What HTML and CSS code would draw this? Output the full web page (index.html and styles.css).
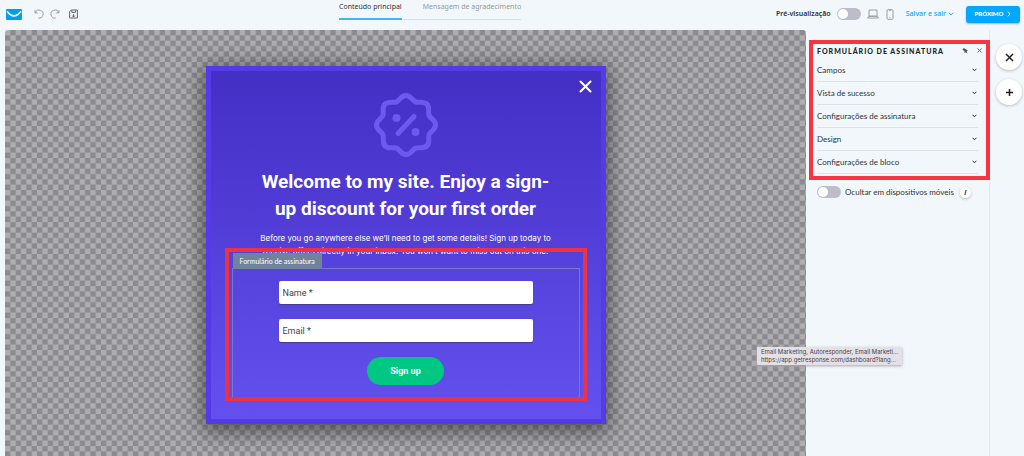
FILE: index.html
```
<!DOCTYPE html>
<html lang="pt">
<head>
<meta charset="utf-8">
<title>Formulário de assinatura</title>
<link rel="stylesheet" href="styles.css">
</head>
<body>
<div class="app">
  <header class="topbar">
    <div class="topbar-left">
      <a class="logo" href="#" aria-label="GetResponse"><svg width="16" height="11" viewBox="0 0 16 11"><rect width="16" height="11" rx="1" fill="#00a0e6" stroke="none"/><path d="M1 2.2Q8 11.5 15 2.2" fill="none" stroke="#fff" stroke-width="1.7"/></svg></a>
      <div class="history">
        <button class="icon-btn muted" aria-label="Desfazer"><svg width="10" height="10" viewBox="0 0 10 10"><path d="M1 1.2v2.7h2.8M1.3 3.7A4 4 0 1 1 4.2 9" /></svg></button>
        <button class="icon-btn muted" aria-label="Refazer"><svg width="10" height="10" viewBox="0 0 10 10"><path d="M9 1.2v2.7H6.2M8.7 3.7A4 4 0 1 0 5.8 9" /></svg></button>
      </div>
      <button class="icon-btn save-icon" aria-label="Salvar"><svg width="9" height="10" viewBox="0 0 9 10"><path d="M2.2 1H8.4V9H.6V2.8zM2.8 1.2V3.4H6.4V1.2M4.5 5.2V8M3.2 6.6 4.5 8 5.8 6.6"/></svg></button>
    </div>
    <nav class="tabs">
      <a class="tab active" href="#">Conteúdo principal</a>
      <a class="tab" href="#">Mensagem de agradecimento</a>
    </nav>
    <div class="topbar-right">
      <label class="preview">Pré-visualização <input type="checkbox" class="switch"></label>
      <div class="devices">
        <button class="icon-btn muted" aria-label="Computador"><svg width="12" height="10" viewBox="0 0 12 10"><path d="M2 1H10V7.2H2zM.5 9H11.5L10.2 7.2H1.8z"/></svg></button>
        <button class="icon-btn muted" aria-label="Telemóvel"><svg width="8" height="11" viewBox="0 0 8 11"><rect x="1" y=".7" width="6" height="9.6" rx="1"/><path d="M3.5 8.8h1M3.4.9v.7h1.2V.9"/></svg></button>
      </div>
      <button class="save">Salvar e sair <svg width="6" height="4" viewBox="0 0 6 4"><path d="M1 .8 3 2.9 5 .8"/></svg></button>
      <button class="next">PRÓXIMO <svg width="4" height="6" viewBox="0 0 4 6"><path d="M.8.6 3.1 3 .8 5.4"/></svg></button>
    </div>
  </header>
  <div class="workspace">
    <main class="canvas">
      <svg class="checker" aria-hidden="true"><defs><pattern id="checks" width="32" height="32" patternUnits="userSpaceOnUse" patternTransform="scale(.3333)"><path fill="#aeaeb1" d="M0 0h32v32H0z"/><path fill="#8b8b8f" d="M16 0h16v16H16zM0 16h16v16H0z"/></pattern></defs><rect width="100%" height="100%" fill="url(#checks)"/></svg>
      <section class="popup">
        <button class="popup-close" aria-label="Fechar"><svg width="13" height="13" viewBox="0 0 13 13"><path d="M1.5 1.5 11.5 11.5M11.5 1.5 1.5 11.5"/></svg></button>
        <svg class="seal" width="66" height="66" viewBox="-33 -33 66 66">
          <defs><path id="lobe" d="M0-29.5C5-29.5 6-24.6 9.6-23.1 13.2-21.6 17-24.8 20.9-20.9"/></defs>
          <use href="#lobe"/><use href="#lobe" transform="rotate(45)"/><use href="#lobe" transform="rotate(90)"/><use href="#lobe" transform="rotate(135)"/><use href="#lobe" transform="rotate(180)"/><use href="#lobe" transform="rotate(225)"/><use href="#lobe" transform="rotate(270)"/><use href="#lobe" transform="rotate(315)"/>
          <path d="M-8 8.5 8-8.5"/>
          <g fill="currentColor" stroke="none"><circle cx="-9.5" cy="-7" r="4"/><circle cx="9.5" cy="7" r="4"/></g>
        </svg>
        <h1>Welcome to my site. Enjoy a sign-<br>up discount for your first order</h1>
        <p class="lead">Before you go anywhere else we’ll need to get some details! Sign up today to<br>receive offers directly in your inbox. You won’t want to miss out on this one!</p>
        <div class="highlight">
          <form class="signup">
            <span class="block-tag">Formulário de assinatura</span>
            <input type="text" placeholder="Name *" aria-label="Name">
            <input type="email" placeholder="Email *" aria-label="Email">
            <button type="button" class="submit">Sign up</button>
          </form>
        </div>
      </section>
    </main>
    <aside class="panel">
      <section class="settings">
        <div class="panel-head">
          <h2>FORMULÁRIO DE ASSINATURA</h2>
          <button class="icon-btn" aria-label="Fixar"><svg width="6" height="6" viewBox="0 0 6 6"><path fill="#555" stroke="none" d="M1.8 0 5.8 2.4 4.7 3.5 5.6 5.5 3.5 4.2 2.6 5.2 2.5 3.2.4 1.4z"/></svg></button>
          <button class="icon-btn" aria-label="Fechar painel"><svg width="5" height="5" viewBox="0 0 5 5"><path d="M.5.5 4.5 4.5M4.5.5.5 4.5"/></svg></button>
        </div>
        <button class="row">Campos <svg width="5" height="4" viewBox="0 0 5 4"><path d="M.6.8 2.5 2.8 4.4.8"/></svg></button>
        <button class="row">Vista de sucesso <svg width="5" height="4" viewBox="0 0 5 4"><path d="M.6.8 2.5 2.8 4.4.8"/></svg></button>
        <button class="row">Configurações de assinatura <svg width="5" height="4" viewBox="0 0 5 4"><path d="M.6.8 2.5 2.8 4.4.8"/></svg></button>
        <button class="row">Design <svg width="5" height="4" viewBox="0 0 5 4"><path d="M.6.8 2.5 2.8 4.4.8"/></svg></button>
        <button class="row">Configurações de bloco <svg width="5" height="4" viewBox="0 0 5 4"><path d="M.6.8 2.5 2.8 4.4.8"/></svg></button>
      </section>
      <div class="hide-row">
        <label class="hide-mobile"><input type="checkbox" class="switch"> Ocultar em dispositivos móveis</label>
        <button class="info" aria-label="Informação">i</button>
      </div>
    </aside>
    <div class="rail">
      <button class="round" aria-label="Fechar"><svg width="9" height="9" viewBox="0 0 9 9"><path d="M1 1 8 8M8 1 1 8"/></svg></button>
      <button class="round" aria-label="Adicionar"><svg width="9" height="9" viewBox="0 0 9 9"><path d="M4.5 1v7M1 4.5h7"/></svg></button>
    </div>
    <div class="tooltip" role="tooltip">Email Marketing, Autoresponder, Email Marketi...<br>https://app.getresponse.com/dashboard?lang...</div>
  </div>
</div>
</body>
</html>
```
FILE: styles.css
```
* { box-sizing: border-box; }
body {
  margin: 0;
  background: #f2f7fb;
  color: #2f3338;
  font: 8px/12px Lato, "Noto Sans", sans-serif;
}
button, input { font: inherit; color: inherit; }
button { border: 0; padding: 0; background: none; }
a { color: inherit; text-decoration: none; }
svg { display: block; fill: none; stroke: currentColor; }

.app { display: flex; flex-direction: column; height: 100vh; overflow: hidden; }

.topbar {
  display: grid;
  grid-template-columns: 333px auto 1fr;
  height: 30px;
  flex: none;
  padding: 0 4px 0 6px;
  font: 7px/12px "Noto Sans", sans-serif;
}
.topbar-left, .topbar-right, .history, .devices, .preview, .save, .next { display: flex; align-items: center; }
.topbar-left { gap: 12px; padding-bottom: 2px; }
.history { gap: 6px; }
.icon-btn { color: #63676b; }
.icon-btn.muted { color: #999ea3; }
.save-icon { margin-left: -3px; }
.tabs { display: flex; align-items: flex-start; }
.tab { height: 20px; padding: 1px 0 1px 21px; border-bottom: 1px solid #d9dee2; color: #94999e; white-space: nowrap; }
.tab.active { padding-left: 0; color: #2f3338; border-bottom: 2px solid #43b4f8; }
.topbar-right { justify-content: flex-end; gap: 12px; padding-bottom: 2px; }
.preview { gap: 6px; font-weight: 600; }
.preview .switch { margin-right: -6px; }
.devices { gap: 7px; }
.save { gap: 2px; color: #0ba5f5; font-weight: 500; }
.next {
  justify-content: center;
  gap: 4px;
  width: 54px;
  height: 17px;
  border-radius: 3px;
  background: #00a9ff;
  color: #fff;
  font-family: Lato, sans-serif;
  font-size: 6px;
  font-weight: 900;
  box-shadow: 0 1px 2px #9bb7c8;
}
.switch {
  appearance: none;
  display: flex;
  align-items: center;
  width: 24px;
  height: 12px;
  margin: 0;
  padding: 1px;
  border-radius: 6px;
  background: #bcbdc9;
}
.switch::before { content: ""; width: 10px; height: 10px; border-radius: 5px; background: #fff; }

.workspace { position: relative; display: flex; flex: 1; min-height: 0; padding-left: 5px; }
.canvas { position: relative; flex: 1; min-width: 0; overflow: hidden; border-radius: 3px 3px 0 0; padding-top: 36px; }
.checker { position: absolute; inset: 0; width: 100%; height: 100%; stroke: none; }
.popup {
  position: relative;
  display: flex;
  flex-direction: column;
  align-items: center;
  max-width: 400px;
  margin: 0 auto;
  padding: 21px 14px 18px;
  border: 5px solid #543ae9;
  background: linear-gradient(#432fc4, #6450ee);
  color: #fff;
  font-family: Roboto, sans-serif;
  box-shadow: 0 4px 20px 3px rgba(0, 0, 0, .5);
}
.popup-close { position: absolute; top: 9px; right: 9px; stroke-width: 2; }
.popup-close svg { stroke-linecap: round; }
.seal { color: #6e59ee; stroke-width: 5; stroke-linecap: round; }
.popup h1 { margin: 10px 0; font: 700 19px/27px Roboto, sans-serif; text-align: center; white-space: nowrap; }
.lead { margin: 0; font: 8px/13px Inter, sans-serif; text-align: center; white-space: nowrap; }
.highlight { position: relative; width: 100%; margin-top: -10px; border: 4px solid #ec3346; padding: 16px 3px 0; }
.signup {
  position: relative;
  display: flex;
  flex-direction: column;
  align-items: center;
  gap: 15px;
  padding: 12px 0;
  border: 1px solid #7b78cb;
  border-bottom: 0;
}
.block-tag { position: absolute; left: 0; top: -16px; padding: 2px 7px; height: 16px; background: #70839c; font: 7px/12px Lato, sans-serif; }
.signup input {
  width: 254px;
  height: 23px;
  border: 0;
  border-radius: 2px;
  padding: 0 4px;
  background: #fff;
  font-size: 9px;
  box-shadow: 0 1px 1px #443a88;
}
.signup input::placeholder { color: #444; opacity: 1; }
.submit { width: 77px; height: 28px; border-radius: 14px; background: #00c781; font-size: 9px; font-weight: 700; }

.panel { width: 184px; flex: none; border-right: 1px solid #e4e9ee; }
.settings { position: relative; margin: 10px -1px 0 3px; border: 4px solid #f93341; padding: 0 4px 2px; }
.panel-head { display: flex; align-items: center; gap: 9px; height: 15px; padding-bottom: 2px; }
.panel-head h2 { flex: 1; margin: 0; font-size: 7px; font-weight: 900; line-height: 12px; letter-spacing: 1px; white-space: nowrap; color: #202327; }
.row {
  display: flex;
  align-items: center;
  justify-content: space-between;
  width: 161px;
  height: 23px;
  padding-right: 1px;
  border-bottom: 1px solid #dce2e7;
}
.hide-row { display: flex; align-items: center; gap: 6px; padding: 6px 0 0 11px; }
.hide-mobile { display: flex; align-items: center; gap: 4px; white-space: nowrap; }
.info, .round { border-radius: 50%; background: #fff; box-shadow: 0 1px 3px #b3bac2; }
.info { width: 11px; height: 11px; font: italic 700 7px/11px "Noto Sans", sans-serif; }
.rail { display: flex; flex-direction: column; align-items: center; gap: 9px; width: 34px; padding: 14px 0 0 4px; flex: none; }
.round { display: grid; place-items: center; width: 26px; height: 26px; color: #222; }
.round svg { stroke-width: 1.5; }
.tooltip {
  position: absolute;
  left: 757px;
  top: 317px;
  padding: 1px 4px;
  border-radius: 1px;
  background: #e5dfe6;
  color: #444;
  font: 6px/8px Inter, sans-serif;
  white-space: nowrap;
  box-shadow: 0 1px 3px #a5a5ad;
}
```
